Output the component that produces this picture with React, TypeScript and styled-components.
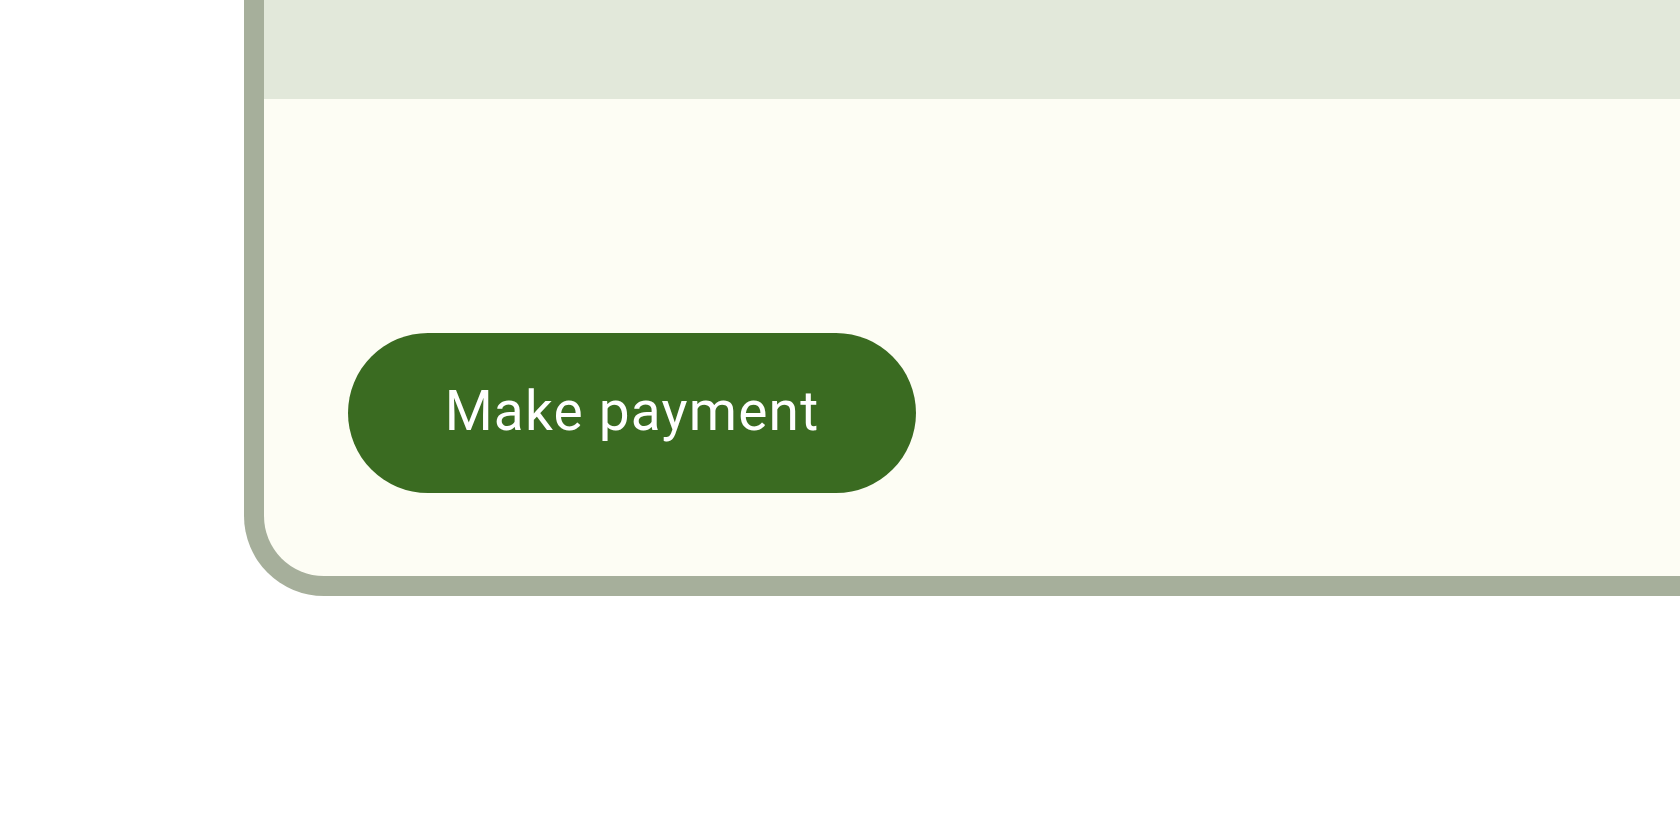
import React from "react";
import styled, {createGlobalStyle} from "styled-components";

const GlobalStyle = createGlobalStyle`
  html, body {
    margin: 0;
    padding: 0;
    background: #ffffff;
    overflow: hidden;
  }
  body {
    font-family: Roboto, "Noto Sans", sans-serif;
  }
`

const Page = styled.div`
  width: 1680px;
  height: 840px;
  padding-left: 244px;
  box-sizing: border-box;
`

const Card = styled.section`
  width: 1600px;
  border: 20px solid #a6af9b;
  border-top: 0;
  border-radius: 0 0 0 80px;
  background-color: #fdfdf4;
  overflow: hidden;
  box-sizing: border-box;
`

const CardHeader = styled.div`
  height: 99px;
  background-color: #e2e8da;
`

const CardBody = styled.div`
  display: flex;
  padding: 234px 0 83px 84px;
`

const PayButton = styled.button`
  all: unset;
  display: flex;
  align-items: center;
  justify-content: center;
  box-sizing: border-box;
  width: 568px;
  height: 160px;
  padding-bottom: 5px;
  border-radius: 80px;
  background-color: #3a6b21;
  color: #ffffff;
  font-family: Roboto, "Noto Sans", sans-serif;
  font-size: 55px;
  font-weight: 400;
  letter-spacing: 1.2px;
  cursor: pointer;
`

const App: React.FunctionComponent = () => {
    return (
        <>
            <GlobalStyle/>
            <Page>
                <Card>
                    <CardHeader/>
                    <CardBody>
                        <PayButton>Make payment</PayButton>
                    </CardBody>
                </Card>
            </Page>
        </>
    )
}

export default App
